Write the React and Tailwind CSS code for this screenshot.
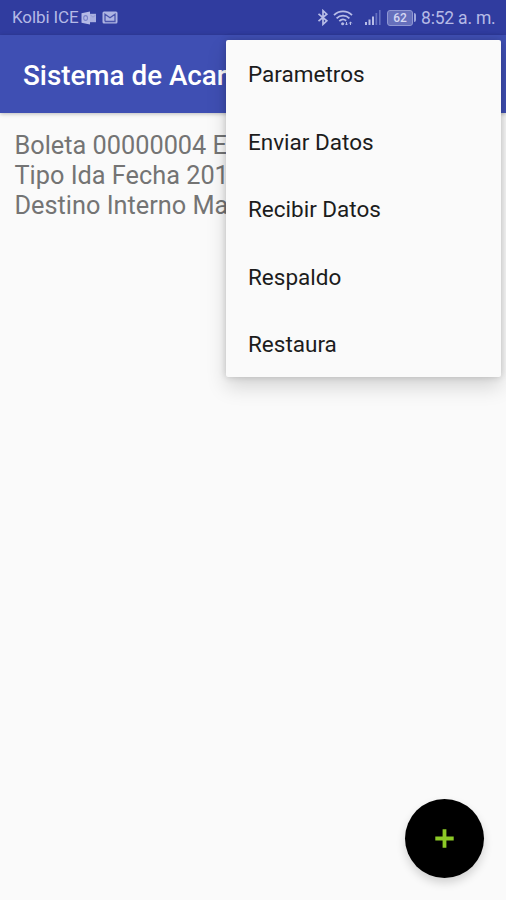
const menuItems = ["Parametros", "Enviar Datos", "Recibir Datos", "Respaldo", "Restaura"];

function OutlookIcon() {
  return (
    <svg className="ml-[2px] h-[14px] w-[16px]" viewBox="0 0 16 14">
      <path d="M0.5 2.2L9 0.4V13.6L0.5 11.8Z" fill="#b5bae6" />
      <path d="M9 2.8H15V11.2H9Z" fill="#a9afe0" />
      <path d="M9.6 4.2L12 6.2L14.5 4.2" fill="none" stroke="#8d95d2" strokeWidth="0.9" />
      <ellipse cx="4.6" cy="7" rx="1.9" ry="2.4" fill="none" stroke="#7a83c9" strokeWidth="1.1" />
    </svg>
  );
}

function MailIcon() {
  return (
    <svg className="ml-[5px] h-[13px] w-[16px]" viewBox="0 0 16 13">
      <rect x="0.5" y="0.5" width="15" height="12" rx="1.5" fill="#aeb4e2" />
      <path d="M3 10.5V3.3L8 6.8L13 3.3V10.5H3" fill="none" stroke="#4a54ac" strokeWidth="1.3" />
    </svg>
  );
}

function BluetoothIcon() {
  return (
    <svg className="h-[17px] w-[12px]" viewBox="0 0 12 17" fill="none" stroke="#b8bde7" strokeWidth="1.7">
      <path d="M1.5 4.8L9.8 11.8L6 15.3V1.7L9.8 5.2L1.5 12.2" />
    </svg>
  );
}

function WifiIcon() {
  return (
    <svg className="ml-[4px] h-[16px] w-[20px]" viewBox="0 0 20 16" fill="none" stroke="#b8bde7" strokeWidth="1.8">
      <path d="M1 5.2C6 0.2 14 0.2 19 5.2M3.6 8.4C7.2 4.8 12.8 4.8 16.4 8.4M6.3 11.2C8.3 9.2 11.2 9.1 13.2 10.7" />
      <circle cx="9.6" cy="13.7" r="1.5" fill="#b8bde7" stroke="none" />
      <path d="M13.5 12V15M12.2 13.7L13.5 15L14.8 13.7M17.5 15V12M16.2 13.3L17.5 12L18.8 13.3" strokeWidth="1" />
    </svg>
  );
}

function SignalIcon() {
  return (
    <svg className="ml-[11px] h-[17px] w-[17px]" viewBox="0 0 17 17">
      <path d="M1 13H3V16H1ZM4.5 10.5H6.5V16H4.5ZM8 7.5H10V16H8Z" fill="#b8bde7" />
      <path d="M11.5 4H13.2V16H11.5ZM15 1H16.6V16H15Z" fill="#6570c0" />
    </svg>
  );
}

function Battery() {
  return (
    <div className="ml-[6px] flex items-center">
      <div className="flex h-[16px] w-[26px] items-center justify-center rounded-[3px] border border-[#8f97d3] bg-[#6670bc] text-[12px] leading-none font-medium text-[#d5d8f3]">
        62
      </div>
      <div className="ml-px h-[9px] w-[2px] rounded-r-sm bg-[#a0a7dc]" />
    </div>
  );
}

function StatusBar() {
  return (
    <div className="flex h-[35px] items-center justify-between bg-[#303c9f] pr-[11px] pl-[12px] text-[#b5bae6]">
      <div className="flex h-full items-center">
        <span className="w-[67px] pt-px text-[17px] tracking-[-0.1px] whitespace-nowrap">Kolbi ICE</span>
        <OutlookIcon />
        <MailIcon />
      </div>
      <div className="flex h-full items-center">
        <BluetoothIcon />
        <WifiIcon />
        <SignalIcon />
        <Battery />
        <span className="ml-[5px] w-[74px] pt-px text-[17.5px] tracking-[-0.2px] whitespace-nowrap">8:52 a. m.</span>
      </div>
    </div>
  );
}

export default function App() {
  return (
    <div className="relative flex h-[900px] w-[506px] flex-col overflow-hidden bg-[#fafafa] font-[Roboto,sans-serif]">
      <StatusBar />
      <header className="flex h-[78px] items-center bg-[#3f4fb3] pt-[3px] pl-[23px] shadow-[0_1px_4px_rgba(0,0,0,0.25)]">
        <h1 className="text-[27.8px] font-medium whitespace-nowrap text-white">Sistema de Acar</h1>
      </header>
      <main className="px-[14.5px] pt-[18px] text-[25.3px] leading-[30px] whitespace-nowrap text-[#747474]">
        <p>Boleta 00000004 E</p>
        <p>Tipo Ida Fecha 201</p>
        <p>Destino Interno Ma</p>
      </main>

      <nav className="absolute top-[39.5px] left-[225.5px] flex h-[337.5px] w-[275.5px] flex-col rounded-[2px] bg-[#fafafa] shadow-[0_10px_20px_rgba(0,0,0,0.15),0_0_7px_rgba(0,0,0,0.18)]">
        {menuItems.map((item) => (
          <button key={item} className="flex flex-1 items-center pt-[4px] pl-[22.5px] text-left text-[22.5px] text-[#1c1c1c]">
            {item}
          </button>
        ))}
      </nav>

      <button aria-label="+" className="absolute top-[799px] left-[405px] flex size-[79px] items-center justify-center rounded-full bg-black shadow-[0_5px_10px_rgba(0,0,0,0.16)]">
        <svg className="size-[19px]" viewBox="0 0 19 19">
          <path d="M9.5 0.3V18.7M0.3 9.5H18.7" stroke="#8cc926" strokeWidth="3.8" />
        </svg>
      </button>
    </div>
  );
}
